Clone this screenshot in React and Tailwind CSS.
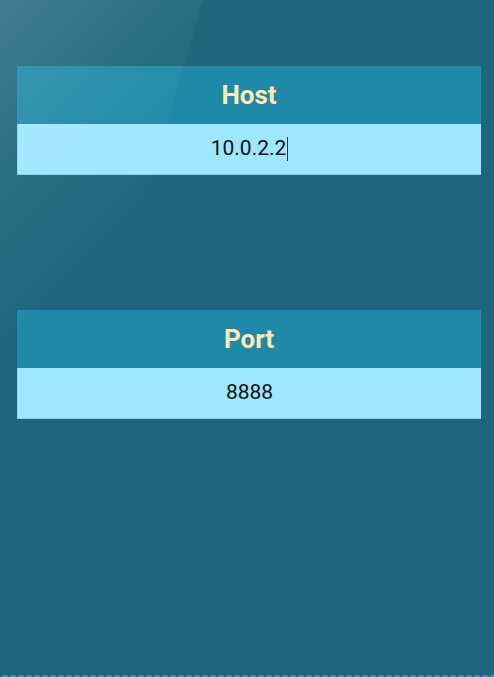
export default function App() {
  return (
    <div className="relative w-[494px] h-[677px] overflow-hidden bg-[#1f667d] font-['Roboto',sans-serif]">
      <div className="pl-[17px] pr-[13px] pt-[66px] flex flex-col gap-[135px]">
        <Field label="Host" value="10.0.2.2" cursor />
        <Field label="Port" value="8888" />
      </div>
      {/* glare in the top-left corner */}
      <div className="pointer-events-none absolute inset-0 [clip-path:polygon(0_0,203px_0,0_694px)] bg-[linear-gradient(135deg,rgba(255,255,255,0.15)_0%,rgba(255,255,255,0.05)_17%,rgba(255,255,255,0)_30%)]" />
      <div className="absolute left-0 right-0 bottom-0 h-[2px] bg-[repeating-linear-gradient(90deg,transparent_0,transparent_2px,#5b8594_2px,#5b8594_8px)]" />
    </div>
  );
}

function Field({ label, value, cursor }) {
  return (
    <div className="flex flex-col">
      <div className="h-[58px] bg-[#1f8aa8] flex items-center justify-center text-[26px] font-bold text-[#ffe9b0]">
        {label}
      </div>
      <div className="h-[51px] bg-[#9fe6ff] border-l border-b border-[#86d3ec] flex items-center justify-center text-[21px] text-[#111]">
        <span>{value}</span>
        {cursor && <span className="ml-px w-px h-[24px] bg-[#333]" />}
      </div>
    </div>
  );
}
